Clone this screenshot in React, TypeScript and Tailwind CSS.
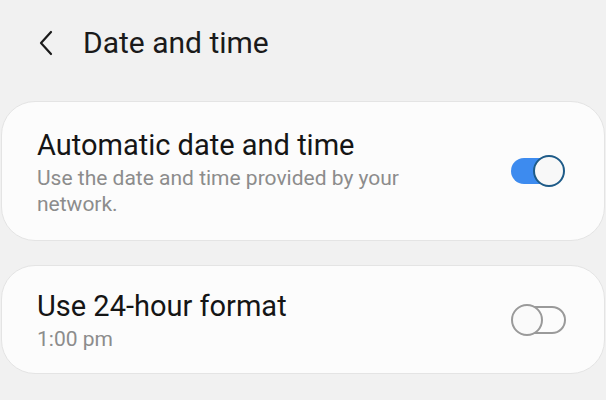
import React from "react";

function Toggle({ on }: { on: boolean }) {
  if (on) {
    return (
      <svg width="58" height="34" viewBox="0 0 58 34" className="shrink-0">
        <rect x="2" y="4" width="52" height="26" rx="13" fill="#3d8bef" />
        <circle cx="40" cy="17" r="15" fill="#f8f8f8" stroke="#1e5b88" strokeWidth="2" />
      </svg>
    );
  }
  return (
    <svg width="58" height="34" viewBox="0 0 58 34" className="shrink-0">
      <rect x="4" y="4" width="52" height="26" rx="13" fill="none" stroke="#9a9a9a" strokeWidth="2" />
      <circle cx="18" cy="17" r="15" fill="#fafafa" stroke="#9a9a9a" strokeWidth="2" />
    </svg>
  );
}

function SettingCard({
  title,
  summary,
  on,
  height,
}: {
  title: string;
  summary: React.ReactNode;
  on: boolean;
  height: string;
}) {
  return (
    <div
      className={`flex items-center justify-between rounded-[34px] border border-[#e4e4e4] bg-[#fcfcfc] pl-[35px] pr-[37px] ${height}`}
    >
      <div className="flex flex-col pt-[2px]">
        <div className="text-[29px] leading-[34px] text-[#151515]">{title}</div>
        <div className="mt-[3px] w-[400px] text-[21px] leading-[26px] text-[#8c8c8c]">{summary}</div>
      </div>
      <Toggle on={on} />
    </div>
  );
}

export default function App() {
  return (
    <main
      className="h-[400px] w-[606px] overflow-hidden bg-[#f1f1f1]"
      style={{ fontFamily: "Roboto, 'Liberation Sans', sans-serif" }}
    >
      <div className="flex h-[86px] items-center pl-[38px]">
        <svg width="18" height="26" viewBox="0 0 18 26" className="mr-[27px]">
          <path d="M13 2 L3 13 L13 24" fill="none" stroke="#1a1a1a" strokeWidth="2.2" strokeLinecap="round" strokeLinejoin="round" />
        </svg>
        <h1 className="text-[30px] leading-[34px] text-[#1a1a1a]">Date and time</h1>
      </div>

      <div className="mt-[15px] flex flex-col gap-[24px] px-px">
        <SettingCard
          title="Automatic date and time"
          summary="Use the date and time provided by your network."
          on
          height="h-[140px]"
        />
        <SettingCard title="Use 24-hour format" summary="1:00 pm" on={false} height="h-[109px]" />
      </div>
    </main>
  );
}
